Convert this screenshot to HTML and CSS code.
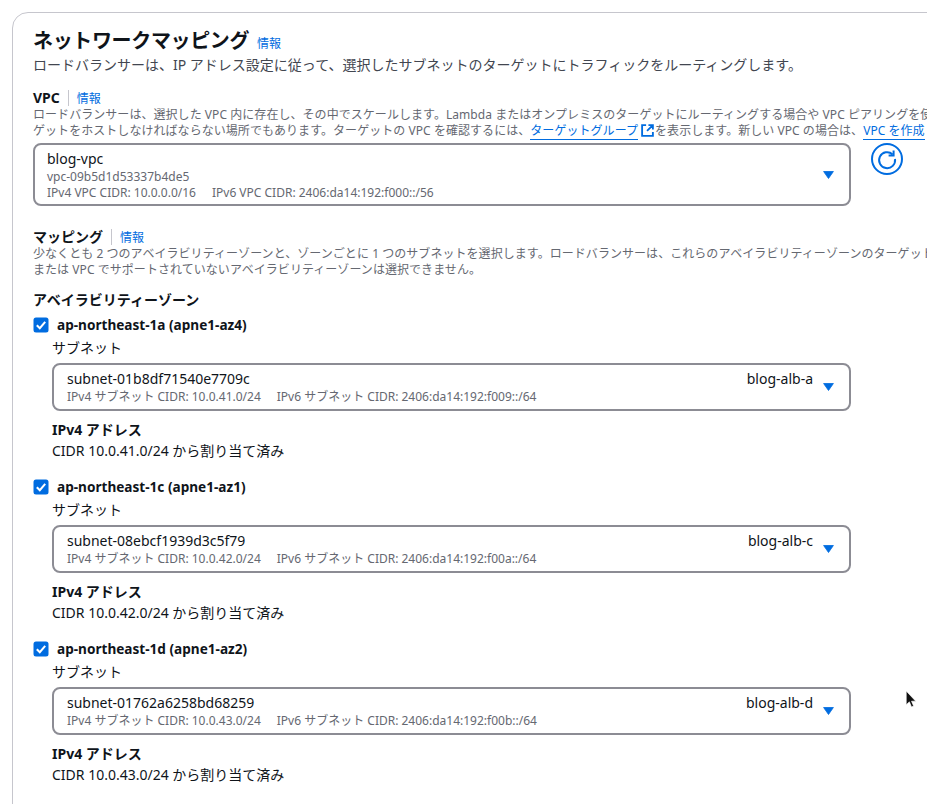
FILE: index.html
```html
<!DOCTYPE html>
<html lang="ja">
<head>
<meta charset="utf-8">
<title>ネットワークマッピング</title>
<link rel="stylesheet" href="styles.css">
</head>
<body>
<svg class="defs" width="0" height="0" aria-hidden="true">
  <symbol id="caret" viewBox="0 0 11 8"><path d="M0.6 0.5H10.4L5.5 7.5Z" fill="#006ce0" stroke="#006ce0" stroke-width="0.8" stroke-linejoin="round"/></symbol>
  <symbol id="check" viewBox="0 0 16 16"><rect x="0.5" y="0.5" width="15" height="15" rx="2.5" fill="#006ce0"/><path d="M3.8 8.2 6.8 11.2 12.2 4.8" fill="none" stroke="#fff" stroke-width="2"/></symbol>
</svg>
<main class="card">
  <h2 class="title">ネットワークマッピング <a class="info info-head">情報</a></h2>
  <p class="lead">ロードバランサーは、IP アドレス設定に従って、選択したサブネットのターゲットにトラフィックをルーティングします。</p>

  <section class="vpc">
    <div class="label-row"><span class="label">VPC</span><a class="info">情報</a></div>
    <p class="desc">ロードバランサーは、選択した VPC 内に存在し、その中でスケールします。Lambda またはオンプレミスのターゲットにルーティングする場合や VPC ピアリングを使<br>ゲットをホストしなければならない場所でもあります。ターゲットの VPC を確認するには、<a class="link">ターゲットグループ</a><svg class="ext" viewBox="0 0 14 14" aria-hidden="true"><path d="M5.5 1.2H1.2V12.8H12.8V8.5M8 1.2H12.8V6M12.5 1.5 6.5 7.5" fill="none" stroke="#006ce0" stroke-width="2"/></svg>を表示します。新しい VPC の場合は、<a class="link">VPC を作成</a></p>
    <div class="select-row">
      <div class="select select-vpc">
        <div class="select-text">
          <div class="main-line">blog-vpc</div>
          <div class="sub-line sub-tall">vpc-09b5d1d53337b4de5</div>
          <div class="sub-line"><span class="tag">IPv4 VPC CIDR: 10.0.0.0/16</span><span>IPv6 VPC CIDR: 2406:da14:192:f000::/56</span></div>
        </div>
        <svg class="caret"><use href="#caret"/></svg>
      </div>
      <svg class="refresh" viewBox="0 0 32 32" aria-hidden="true"><circle cx="16" cy="16" r="15" fill="none" stroke="#006ce0" stroke-width="2"/><path d="M21.6 11.4A8 8 0 1 0 24 16" fill="none" stroke="#006ce0" stroke-width="2"/><path d="M22.6 7.5V12.4H17.6" fill="none" stroke="#006ce0" stroke-width="2"/></svg>
    </div>
  </section>

  <section class="mapping">
    <div class="label-row"><span class="label">マッピング</span><a class="info">情報</a></div>
    <p class="desc">少なくとも 2 つのアベイラビリティーゾーンと、ゾーンごとに 1 つのサブネットを選択します。ロードバランサーは、これらのアベイラビリティーゾーンのターゲット<br>または VPC でサポートされていないアベイラビリティーゾーンは選択できません。</p>
    <h3 class="az-head">アベイラビリティーゾーン</h3>

    <div class="az">
      <label class="az-check"><svg class="checkbox"><use href="#check"/></svg>ap-northeast-1a (apne1-az4)</label>
      <div class="az-body">
        <div class="field">サブネット</div>
        <div class="select select-subnet">
          <div class="select-text">
            <div class="main-line">subnet-01b8df71540e7709c</div>
            <div class="sub-line sub-tall"><span class="tag">IPv4 サブネット CIDR: 10.0.41.0/24</span><span>IPv6 サブネット CIDR: 2406:da14:192:f009::/64</span></div>
          </div>
          <div class="name">blog-alb-a</div>
          <svg class="caret"><use href="#caret"/></svg>
        </div>
        <div class="addr-head">IPv4 アドレス</div>
        <div class="addr">CIDR 10.0.41.0/24 から割り当て済み</div>
      </div>
    </div>

    <div class="az">
      <label class="az-check"><svg class="checkbox"><use href="#check"/></svg>ap-northeast-1c (apne1-az1)</label>
      <div class="az-body">
        <div class="field">サブネット</div>
        <div class="select select-subnet">
          <div class="select-text">
            <div class="main-line">subnet-08ebcf1939d3c5f79</div>
            <div class="sub-line sub-tall"><span class="tag">IPv4 サブネット CIDR: 10.0.42.0/24</span><span>IPv6 サブネット CIDR: 2406:da14:192:f00a::/64</span></div>
          </div>
          <div class="name">blog-alb-c</div>
          <svg class="caret"><use href="#caret"/></svg>
        </div>
        <div class="addr-head">IPv4 アドレス</div>
        <div class="addr">CIDR 10.0.42.0/24 から割り当て済み</div>
      </div>
    </div>

    <div class="az">
      <label class="az-check"><svg class="checkbox"><use href="#check"/></svg>ap-northeast-1d (apne1-az2)</label>
      <div class="az-body">
        <div class="field">サブネット</div>
        <div class="select select-subnet">
          <div class="select-text">
            <div class="main-line">subnet-01762a6258bd68259</div>
            <div class="sub-line sub-tall"><span class="tag">IPv4 サブネット CIDR: 10.0.43.0/24</span><span>IPv6 サブネット CIDR: 2406:da14:192:f00b::/64</span></div>
          </div>
          <div class="name">blog-alb-d</div>
          <svg class="caret"><use href="#caret"/></svg>
        </div>
        <div class="addr-head">IPv4 アドレス</div>
        <div class="addr">CIDR 10.0.43.0/24 から割り当て済み</div>
      </div>
    </div>
  </section>
</main>
<svg class="cursor" viewBox="0 0 12 18" aria-hidden="true"><path d="M1 1V14L4 11.2 6 16 8 15.2 6 10.6H10Z" fill="#111" stroke="#fff" stroke-width="0.6"/></svg>
</body>
</html>
```

FILE: styles.css
```css
html, body {
  margin: 0;
  height: 804px;
  overflow: hidden;
  background: #fff;
}
body {
  font-family: "Noto Sans", "Noto Sans CJK JP", sans-serif;
  color: #0f141a;
  font-size: 14px;
}
.defs { position: absolute; }
.card {
  margin: 12px 0 0 12px;
  width: 1100px;
  height: 900px;
  box-sizing: border-box;
  border: 1px solid #c6c6cd;
  border-radius: 16px;
  padding: 14px 20px 0;
}
.title {
  margin: 0;
  font-size: 20px;
  line-height: 28px;
  font-weight: 700;
  white-space: nowrap;
  letter-spacing: -0.35px;
}
.info {
  color: #006ce0;
  font-size: 12px;
  font-weight: 400;
  letter-spacing: 0;
}
.info-head { margin-left: 3px; }
.lead {
  margin: -3px 0 0;
  font-size: 14px;
  line-height: 20px;
  color: #424650;
  white-space: nowrap;
}
.vpc { margin-top: 15px; }
.label-row {
  display: flex;
  align-items: center;
  height: 16px;
}
.label {
  font-size: 14px;
  font-weight: 700;
  padding-right: 8px;
  border-right: 1px solid #c6c6cd;
  margin-right: 8px;
  line-height: 16px;
}
.desc {
  margin: 1px 0 0;
  font-size: 12px;
  line-height: 16px;
  color: #656871;
  white-space: nowrap;
  letter-spacing: 0.05px;
}
.link {
  color: #006ce0;
  border-bottom: 1px solid #006ce0;
}
.ext {
  width: 13px;
  height: 13px;
  margin: 0 1px 0 3px;
  vertical-align: -2px;
}
.select-row {
  display: flex;
  align-items: flex-start;
  margin-top: 4px;
}
.select {
  box-sizing: border-box;
  width: 818px;
  border: 2px solid #8c8c94;
  border-radius: 8px;
  background: #fff;
  display: flex;
  align-items: center;
  flex: none;
}
.select-vpc {
  height: 63px;
  padding: 0 15px 0 12px;
}
.select-subnet {
  width: 799px;
  height: 48px;
  padding: 0 15px 0 13px;
  margin-top: 6px;
}
.select-text { flex: 1; }
.main-line {
  font-size: 14px;
  line-height: 19px;
}
.sub-line {
  font-size: 12px;
  line-height: 16px;
  color: #656871;
  white-space: nowrap;
}
.sub-tall { line-height: 17px; }
.tag { margin-right: 16px; }
.caret {
  width: 11px;
  height: 8px;
  flex: none;
}
.name {
  font-size: 14px;
  line-height: 19px;
  margin: 4px 10px 0 0;
  align-self: flex-start;
}
.refresh {
  width: 32px;
  height: 32px;
  margin-left: 20px;
}
.mapping { margin-top: 23px; }
.az-head {
  margin: 13px 0 0;
  font-size: 14px;
  line-height: 18px;
  font-weight: 700;
}
.az { margin-bottom: 18px; }
.az-head + .az { margin-top: 7px; }
.az-check {
  display: flex;
  align-items: center;
  font-size: 13.6px;
  font-weight: 700;
  line-height: 18px;
  height: 18px;
}
.checkbox {
  width: 16px;
  height: 16px;
  margin-right: 8px;
  flex: none;
}
.az-body { padding-left: 19px; }
.field {
  margin-top: 5px;
  font-size: 14px;
  line-height: 18px;
}
.addr-head {
  margin-top: 10px;
  font-weight: 700;
  font-size: 14px;
  line-height: 18px;
}
.addr {
  margin-top: 3px;
  font-size: 14px;
  line-height: 18px;
}
.cursor {
  position: absolute;
  left: 905px;
  top: 690px;
  width: 13px;
  height: 19px;
}
```
